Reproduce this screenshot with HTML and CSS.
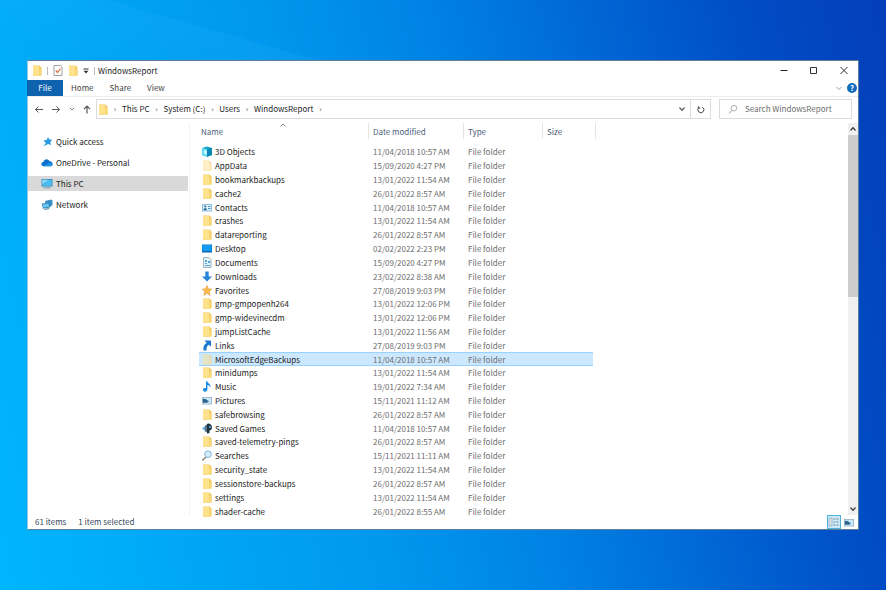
FILE: index.html
```html
<!DOCTYPE html>
<html lang="en">
<head>
  <meta charset="UTF-8">
  <meta name="viewport" content="width=device-width, initial-scale=1.0">
  <title>WindowsReport</title>
  <link rel="stylesheet" href="styles.css">
</head>
<body>
  <!-- Icon definitions -->
  <svg class="sprite" aria-hidden="true">
    <symbol id="folder" viewBox="0 0 10 11">
      <path d="M1 .5h6.500l1 1.200h1V10.500H1z" fill="#f0cd66"/>
      <path d="M1 .8h6v9.700H1z" fill="#ffe28c"/>
      <path d="M7 4.500h2.500v6H1V9.800h6z" fill="#f7d774"/>
    </symbol>
    <symbol id="cube" viewBox="0 0 10 11">
      <path d="M0 2l5-1.500L10 2v7l-5 1.700L0 9z" fill="#19a5c8"/>
      <path d="M0 2l5 1v7.700L0 9z" fill="#5fe0f0"/>
      <path d="M2 4l3 .6v4L2 8z" fill="#c9f6fd"/>
      <path d="M5 3l5-1v7l-5 1.700z" fill="#0a86b4"/>
    </symbol>
    <symbol id="contacts" viewBox="0 0 10 11">
      <path d="M0 2h10v7.500H0z" fill="#8dbcdc"/>
      <path d="M1 3h8v5.500H1z" fill="#e2f2fb"/>
      <circle cx="3.200" cy="4.500" r="1.100" fill="#2d6d9b"/>
      <path d="M1.500 8.200c0-3 3.400-3 3.400 0z" fill="#2d6d9b"/>
      <path d="M6 4h2.500v1H6zm0 2h2.500v1H6z" fill="#4b94c8"/>
    </symbol>
    <symbol id="desktop" viewBox="0 0 10 11">
      <path d="M0 1.500h10V9H0z" fill="#0877d0"/>
      <path d="M.6 2h8.800v6H.6z" fill="#149cf1"/>
      <path d="M0 8.500h10v1H0z" fill="#065fa8"/>
    </symbol>
    <symbol id="document" viewBox="0 0 10 11">
      <path d="M1.500.5h5.500l2 2v8H1.500z" fill="#e6f1f8" stroke="#8ba2b2" stroke-width=".8"/>
      <path d="M3 3h2v2H3zm3 1h2v2H6zM3 6h2v1H3zm0 2h5v1H3z" fill="#4ca5de"/>
    </symbol>
    <symbol id="download" viewBox="0 0 10 11">
      <path d="M3.300.5h3.400v5H10l-5 5-5-5h3.300z" fill="#2685da"/>
    </symbol>
    <symbol id="star" viewBox="0 0 10 11">
      <path d="M5 .3l1.500 3.500 3.500.3-2.700 2.500.9 3.900L5 8.400l-3.200 2.100.9-3.900L0 4.100l3.500-.3z" fill="#f8bd4a" stroke="#dd9a44" stroke-width=".5"/>
    </symbol>
    <symbol id="shortcut" viewBox="0 0 10 11">
      <path d="M2.500.5H9v6.300L6.900 4.800C4.800 6 4.300 8 4.600 10.500H1.500C.8 7 2 4.500 4.600 2.700z" fill="#1f7bd0"/>
    </symbol>
    <symbol id="music" viewBox="0 0 10 11">
      <path d="M4 .3h1.300c.2 2 3.500 2.500 3.300 6.200C7.700 4.700 6.800 4.200 5.400 4v4.600c0 2.600-4.400 2.700-4.400.4C1 7.300 2.800 6.700 4 7.300z" fill="#168be4"/>
    </symbol>
    <symbol id="picture" viewBox="0 0 10 11">
      <path d="M0 2h10v7.500H0z" fill="#a3b5c2"/>
      <path d="M.8 2.800h8.400v5.900H.8z" fill="#c7e7fa"/>
      <path d="M.8 4C3 3.500 4.500 4.500 5.500 5.500l1.500 1-2 1.200H.8z" fill="#2d6590"/>
    </symbol>
    <symbol id="games" viewBox="0 0 10 11">
      <path d="M0 5.500L3 3v5z" fill="#63b4e3"/>
      <path d="M3 2.500L6 1v9L3 8.500z" fill="#5d7483"/>
      <path d="M6 .5c5 0 5 7 1.500 7V10L5 10.500V1z" fill="#1f3442"/>
      <path d="M7.200 3h1.500v2H7.200z" fill="#5ab8e8"/>
    </symbol>
    <symbol id="searches" viewBox="0 0 10 11">
      <path d="M4 7L.8 10" stroke="#8a7f78" stroke-width="1.500" stroke-linecap="round"/>
      <circle cx="6" cy="4.200" r="3.300" fill="#d3edfb" stroke="#84b3d1"/>
    </symbol>
    <symbol id="pin" viewBox="0 0 12 11">
      <path d="M7 1l1.400 2.600 2.900.2-2 2.300.7 3-2.900-1.100L2.500 10.300 4.800 7 2.300 4.500l3.400-.6z" fill="#2b9be3"/>
    </symbol>
    <symbol id="cloud" viewBox="0 0 12 11">
      <path d="M2.800 9.200C-.5 9.200-.3 5.300 2.400 5 3 1.600 7.300 1.200 8.600 4.300c3.400-.2 4.200 4.900.9 4.900z" fill="#0f6fcd"/>
      <path d="M2.500 9.200l6-3.500c3 .2 3.500 3.500 1 3.500z" fill="#1e93e8"/>
    </symbol>
    <symbol id="monitor" viewBox="0 0 12 11">
      <path d="M.5 1h11v7.500H.5z" fill="#3d88b5"/>
      <path d="M1.300 1.800h9.400v5.900H1.300z" fill="#4bbdf2"/>
      <path d="M1.300 1.800h6l-6 4.500z" fill="#8bdafb"/>
      <path d="M2.500 9.300h7v1h-7z" fill="#6b9cba"/>
    </symbol>
    <symbol id="network" viewBox="0 0 12 11">
      <path d="M4 2L10 .5l1.500 1V6L9 8 5 7.500z" fill="#3a91c7"/>
      <path d="M.8 4.500l7.500-1 .6 5-7 1.200z" fill="#2f7fb6"/>
      <path d="M1.700 5.200l5.900-.8.4 3.400-5.600.9z" fill="#68c7f3"/>
      <path d="M3 9.900l5-.8.500 1-4.500.8z" fill="#5c90b0"/>
    </symbol>
  </svg>

  <main class="window">
    <header class="title-bar">
      <svg class="icon"><use href="#folder"/></svg>
      <span class="bar"></span>
      <button class="plain" aria-label="Properties">
        <svg class="icon" viewBox="0 0 10 11"><path d="M1 .5h6.500L9 2v8.500H1z" fill="#fff" stroke="#8c8c8c" stroke-width=".8"/><path d="M2.800 5.500l1.700 2 3-4" fill="none" stroke="#dc6c35" stroke-width="1.200"/></svg>
      </button>
      <button class="plain" aria-label="New folder"><svg class="icon"><use href="#folder"/></svg></button>
      <button class="plain" aria-label="Customize Quick Access Toolbar">
        <svg class="small-icon" viewBox="0 0 6 6"><path d="M.5.500h5v1h-5zM.5 2.700h5L3 5.500z" fill="#333"/></svg>
      </button>
      <span class="bar"></span>
      <h1>WindowsReport</h1>
      <div class="window-buttons">
        <button class="plain" aria-label="Minimize"><svg class="icon" viewBox="0 0 10 11"><path d="M1.500 5.500h7" stroke="#222"/></svg></button>
        <button class="plain" aria-label="Maximize"><svg class="icon" viewBox="0 0 10 11"><path d="M1.500 2.500h6v6h-6z" fill="none" stroke="#333"/></svg></button>
        <button class="plain" aria-label="Close"><svg class="icon" viewBox="0 0 10 11"><path d="M1.500 2l7 7m0-7l-7 7" stroke="#333"/></svg></button>
      </div>
    </header>

    <nav class="tabs">
      <button class="tab file">File</button>
      <button class="tab">Home</button>
      <button class="tab">Share</button>
      <button class="tab">View</button>
      <button class="plain expand" aria-label="Expand the ribbon"><svg class="small-icon" viewBox="0 0 6 6"><path d="M.5 2L3 4.500 5.500 2" fill="none" stroke="#888" stroke-width=".8"/></svg></button>
      <button class="help" aria-label="Help">?</button>
    </nav>

    <div class="address-row">
      <div class="arrows">
        <button class="plain" aria-label="Back"><svg class="icon" viewBox="0 0 10 11"><path d="M9 5.500H1.500M4.500 2.500l-3 3 3 3" fill="none" stroke="#555"/></svg></button>
        <button class="plain" aria-label="Forward"><svg class="icon" viewBox="0 0 10 11"><path d="M1 5.500h7.500M5.500 2.500l3 3-3 3" fill="none" stroke="#555"/></svg></button>
        <button class="plain" aria-label="Recent locations"><svg class="small-icon" viewBox="0 0 6 6"><path d="M1 2l2 2 2-2" fill="none" stroke="#777"/></svg></button>
        <button class="plain" aria-label="Up"><svg class="icon" viewBox="0 0 10 11"><path d="M5 9.500v-7M2 5.200l3-3 3 3" fill="none" stroke="#555" stroke-width="1.200"/></svg></button>
      </div>
      <div class="address">
        <svg class="icon"><use href="#folder"/></svg>
        <span class="sep">›</span>
        <a href="#">This PC</a>
        <span class="sep">›</span>
        <a href="#">System (C:)</a>
        <span class="sep">›</span>
        <a href="#">Users</a>
        <span class="sep">›</span>
        <a href="#">WindowsReport</a>
        <span class="sep">›</span>
        <button class="plain previous" aria-label="Previous locations"><svg class="small-icon" viewBox="0 0 6 6"><path d="M.5 1.500L3 4.300l2.500-2.800" fill="none" stroke="#555" stroke-width="1.200"/></svg></button>
        <button class="plain refresh" aria-label="Refresh"><svg class="icon" viewBox="0 0 10 11"><path d="M6.500 3.200A3 3 0 1 1 3 3.400M2.300 2.200v2h2" fill="none" stroke="#444"/></svg></button>
      </div>
      <label class="search">
        <svg class="icon" viewBox="0 0 10 11"><path d="M4 6.500L1 9.500" stroke="#999"/><circle cx="6" cy="4.200" r="2.800" fill="none" stroke="#999" stroke-width=".8"/></svg>
        <input type="search" placeholder="Search WindowsReport" aria-label="Search WindowsReport">
      </label>
    </div>

    <div class="content">
      <nav class="sidebar">
        <a href="#"><svg class="side-icon"><use href="#pin"/></svg>Quick access</a>
        <a href="#"><svg class="side-icon"><use href="#cloud"/></svg>OneDrive - Personal</a>
        <a href="#" class="active"><svg class="side-icon"><use href="#monitor"/></svg>This PC</a>
        <a href="#"><svg class="side-icon"><use href="#network"/></svg>Network</a>
      </nav>

      <section class="files">
        <table>
          <colgroup><col class="col-name"><col class="col-date"><col class="col-type"><col class="col-size"></colgroup>
          <thead>
            <tr>
              <th>Name<svg class="sort" viewBox="0 0 6 4"><path d="M.5 3.500L3 1l2.500 2.500" fill="none" stroke="#666" stroke-width=".8"/></svg></th>
              <th>Date modified</th>
              <th>Type</th>
              <th>Size</th>
            </tr>
          </thead>
          <tbody>
            <tr><td><svg class="icon"><use href="#cube"/></svg>3D Objects</td><td>11/04/2018 10:57 AM</td><td>File folder</td><td></td></tr>
            <tr><td><svg class="icon faded"><use href="#folder"/></svg>AppData</td><td>15/09/2020 4:27 PM</td><td>File folder</td><td></td></tr>
            <tr><td><svg class="icon"><use href="#folder"/></svg>bookmarkbackups</td><td>13/01/2022 11:54 AM</td><td>File folder</td><td></td></tr>
            <tr><td><svg class="icon"><use href="#folder"/></svg>cache2</td><td>26/01/2022 8:57 AM</td><td>File folder</td><td></td></tr>
            <tr><td><svg class="icon"><use href="#contacts"/></svg>Contacts</td><td>11/04/2018 10:57 AM</td><td>File folder</td><td></td></tr>
            <tr><td><svg class="icon"><use href="#folder"/></svg>crashes</td><td>13/01/2022 11:54 AM</td><td>File folder</td><td></td></tr>
            <tr><td><svg class="icon"><use href="#folder"/></svg>datareporting</td><td>26/01/2022 8:57 AM</td><td>File folder</td><td></td></tr>
            <tr><td><svg class="icon"><use href="#desktop"/></svg>Desktop</td><td>02/02/2022 2:23 PM</td><td>File folder</td><td></td></tr>
            <tr><td><svg class="icon"><use href="#document"/></svg>Documents</td><td>15/09/2020 4:27 PM</td><td>File folder</td><td></td></tr>
            <tr><td><svg class="icon"><use href="#download"/></svg>Downloads</td><td>23/02/2022 8:38 AM</td><td>File folder</td><td></td></tr>
            <tr><td><svg class="icon"><use href="#star"/></svg>Favorites</td><td>27/08/2019 9:03 PM</td><td>File folder</td><td></td></tr>
            <tr><td><svg class="icon"><use href="#folder"/></svg>gmp-gmpopenh264</td><td>13/01/2022 12:06 PM</td><td>File folder</td><td></td></tr>
            <tr><td><svg class="icon"><use href="#folder"/></svg>gmp-widevinecdm</td><td>13/01/2022 12:06 PM</td><td>File folder</td><td></td></tr>
            <tr><td><svg class="icon"><use href="#folder"/></svg>jumpListCache</td><td>13/01/2022 11:56 AM</td><td>File folder</td><td></td></tr>
            <tr><td><svg class="icon"><use href="#shortcut"/></svg>Links</td><td>27/08/2019 9:03 PM</td><td>File folder</td><td></td></tr>
            <tr class="selected"><td><svg class="icon faded"><use href="#folder"/></svg>MicrosoftEdgeBackups</td><td>11/04/2018 10:57 AM</td><td>File folder</td><td></td></tr>
            <tr><td><svg class="icon"><use href="#folder"/></svg>minidumps</td><td>13/01/2022 11:54 AM</td><td>File folder</td><td></td></tr>
            <tr><td><svg class="icon"><use href="#music"/></svg>Music</td><td>19/01/2022 7:34 AM</td><td>File folder</td><td></td></tr>
            <tr><td><svg class="icon"><use href="#picture"/></svg>Pictures</td><td>15/11/2021 11:12 AM</td><td>File folder</td><td></td></tr>
            <tr><td><svg class="icon"><use href="#folder"/></svg>safebrowsing</td><td>26/01/2022 8:57 AM</td><td>File folder</td><td></td></tr>
            <tr><td><svg class="icon"><use href="#games"/></svg>Saved Games</td><td>11/04/2018 10:57 AM</td><td>File folder</td><td></td></tr>
            <tr><td><svg class="icon"><use href="#folder"/></svg>saved-telemetry-pings</td><td>26/01/2022 8:57 AM</td><td>File folder</td><td></td></tr>
            <tr><td><svg class="icon"><use href="#searches"/></svg>Searches</td><td>15/11/2021 11:11 AM</td><td>File folder</td><td></td></tr>
            <tr><td><svg class="icon"><use href="#folder"/></svg>security_state</td><td>13/01/2022 11:54 AM</td><td>File folder</td><td></td></tr>
            <tr><td><svg class="icon"><use href="#folder"/></svg>sessionstore-backups</td><td>26/01/2022 8:57 AM</td><td>File folder</td><td></td></tr>
            <tr><td><svg class="icon"><use href="#folder"/></svg>settings</td><td>13/01/2022 11:54 AM</td><td>File folder</td><td></td></tr>
            <tr><td><svg class="icon"><use href="#folder"/></svg>shader-cache</td><td>26/01/2022 8:55 AM</td><td>File folder</td><td></td></tr>
          </tbody>
        </table>
      </section>

      <div class="scrollbar">
        <button class="plain" aria-label="Scroll up"><svg class="small-icon" viewBox="0 0 6 6"><path d="M.5 4.500L3 1.700l2.500 2.800" fill="none" stroke="#333" stroke-width="1.200"/></svg></button>
        <div class="track"><div class="thumb"></div></div>
        <button class="plain" aria-label="Scroll down"><svg class="small-icon" viewBox="0 0 6 6"><path d="M.5 1.500L3 4.300l2.500-2.800" fill="none" stroke="#333" stroke-width="1.200"/></svg></button>
      </div>
    </div>

    <footer class="status">
      <span>61 items</span>
      <span>1 item selected</span>
      <div class="views">
        <button class="plain view-button current" aria-label="Details view"><svg class="view-icon" viewBox="0 0 12 10"><path d="M1 1h3v8H1z" fill="#d5e2e8" stroke="#8aa0ab" stroke-width=".6"/><path d="M5.500 2h2M8.500 2h2M5.500 5h2M8.500 5h2M5.500 8h2M8.500 8h2" stroke="#6d8794"/></svg></button>
        <button class="plain view-button" aria-label="Large icons view"><svg class="icon"><use href="#picture"/></svg></button>
      </div>
    </footer>
  </main>
</body>
</html>
```

FILE: styles.css
```css
* {
  box-sizing: border-box;
}

body {
  display: flex;
  height: 100vh;
  margin: 0;
  padding: 60px 27px;
  font-family: "Noto Sans CJK SC", "Open Sans", sans-serif;
  font-size: 8px;
  line-height: 12px;
  color: #222;
  background:
    linear-gradient(196deg, transparent 116px, rgba(60, 190, 255, 0.12) 118px, transparent 200px) left top / 60% 100% no-repeat,
    linear-gradient(77deg, #00b6fc 0%, #00a6f6 20%, #0098ee 38%, #0082e4 55%, #0066d4 71%, #004ec6 85%, #043eb8 100%);
}

h1 {
  margin: 0;
  font-size: 8px;
  font-weight: normal;
}

a {
  color: inherit;
  text-decoration: none;
}

button,
input {
  font: inherit;
  color: inherit;
}

.sprite {
  position: absolute;
  width: 0;
  height: 0;
}

.icon {
  width: 10px;
  height: 11px;
  flex-shrink: 0;
}

.small-icon {
  width: 6px;
  height: 6px;
}

.faded {
  opacity: 0.5;
}

.plain {
  display: flex;
  align-items: center;
  justify-content: center;
  padding: 0;
  border: none;
  background: none;
}

.window {
  display: flex;
  flex-direction: column;
  flex: 1;
  min-width: 0;
  background: #fff;
  border: 1px solid #5f7f99;
  border-left-color: #8fc5e6;
}

/* Title bar */
.title-bar {
  display: flex;
  align-items: center;
  gap: 5px;
  height: 19px;
  padding-left: 4px;
}

.bar {
  width: 1px;
  height: 8px;
  background: #bbb;
}

.title-bar h1 {
  margin-left: -2px;
}

.window-buttons {
  display: flex;
  gap: 20px;
  margin-left: auto;
  padding-right: 9px;
}

/* Ribbon tabs */
.tabs {
  display: flex;
  align-items: center;
  height: 17px;
  border-bottom: 1px solid #ececec;
}

.tab {
  height: 16px;
  padding: 0 8px;
  border: none;
  background: none;
  color: #444;
}

.file {
  width: 36px;
  margin-left: -1px;
  background: #0f62ae;
  color: #fff;
}

.expand {
  margin-left: auto;
}

.help {
  width: 10px;
  height: 10px;
  margin: 0 1px 0 5px;
  padding: 0;
  border: none;
  border-radius: 50%;
  background: #0f6cbd;
  color: #fff;
  font-weight: bold;
  line-height: 10px;
}

/* Address bar */
.address-row {
  display: flex;
  gap: 8px;
  padding: 2px 6px 4px;
}

.arrows {
  display: flex;
  align-items: center;
  justify-content: space-between;
  width: 58px;
}

.address {
  display: flex;
  align-items: center;
  flex: 1;
  gap: 5px;
  height: 20px;
  margin-left: -4px;
  padding-left: 1px;
  border: 1px solid #dcdcdc;
}

.sep {
  width: 4px;
  text-align: center;
  color: #555;
}

.previous {
  margin-left: auto;
}

.refresh {
  width: 20px;
  height: 18px;
  border-left: 1px solid #dcdcdc;
}

.search {
  display: flex;
  align-items: center;
  gap: 7px;
  width: 133px;
  padding-left: 8px;
  border: 1px solid #dcdcdc;
}

.search input {
  flex: 1;
  min-width: 0;
  padding: 0;
  border: none;
  outline: none;
  background: none;
}

.search input::placeholder {
  color: #6d6d6d;
}

/* Main area */
.content {
  display: flex;
  flex: 1;
  min-height: 0;
}

.sidebar {
  display: flex;
  flex-direction: column;
  gap: 6px;
  width: 162px;
  padding-top: 11px;
  border-right: 1px solid #f3f3f3;
}

.sidebar a {
  display: flex;
  align-items: center;
  gap: 3px;
  height: 15px;
  margin-right: 1px;
  padding-left: 13px;
}

.sidebar .active {
  background: #d9d9d9;
}

.side-icon {
  width: 12px;
  height: 11px;
}

.files {
  flex: 1;
  min-width: 0;
  padding-left: 9px;
}

/* The last row runs a little into the status bar */
table {
  height: calc(100% + 3px);
  table-layout: fixed;
  width: 397px;
  border-collapse: separate;
  border-spacing: 0;
}

.col-name {
  width: 170px;
}

.col-date {
  width: 95px;
}

.col-type {
  width: 79px;
}

th {
  position: relative;
  height: 22px;
  padding: 1px 4px 5px;
  background: linear-gradient(#e5e5e5, #e5e5e5) right top / 1px 16px no-repeat;
  text-align: left;
  font-weight: normal;
  color: #4c607a;
}

th:first-child {
  padding-left: 2px;
}

.sort {
  position: absolute;
  top: 0;
  left: 81px;
  width: 6px;
  height: 4px;
}

td {
  padding: 0 4px;
  line-height: 13px;
  white-space: nowrap;
  color: #6d6d6d;
}

td:first-child {
  padding-left: 3px;
  color: #222;
}

td:last-child {
  border-right: 3px solid transparent;
  background-clip: padding-box;
}

td .icon {
  display: inline-block;
  margin: 1px 3px 0 0;
  vertical-align: top;
}

.selected td {
  background-color: #cce8ff;
  box-shadow: inset 0 1px #99d1ff, inset 0 -1px #99d1ff;
}

/* Scrollbar */
.scrollbar {
  display: flex;
  flex-direction: column;
  width: 10px;
  background: #f0f0f0;
}

.scrollbar button {
  height: 12px;
}

.track {
  flex: 1;
}

.thumb {
  height: 44%;
  background: #cdcdcd;
}

/* Status bar */
.status {
  display: flex;
  align-items: center;
  gap: 12px;
  height: 14px;
  padding-left: 7px;
  color: #33475b;
}

.views {
  display: flex;
  gap: 1px;
  margin-left: auto;
  padding-right: 2px;
}

.view-button {
  width: 14px;
  height: 14px;
}

.current {
  border: 1px solid #4fb3dc;
  background: #cdeafa;
}

.view-icon {
  width: 12px;
  height: 10px;
}
```
